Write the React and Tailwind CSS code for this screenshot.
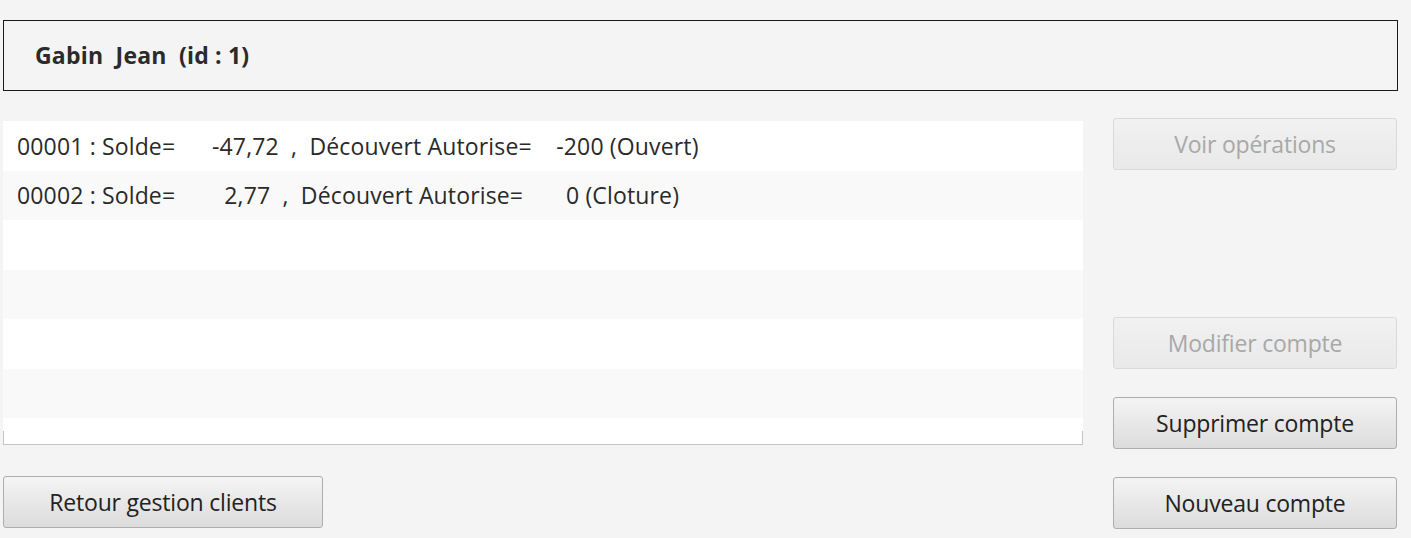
const accounts = [
  "00001 : Solde=      -47,72  ,  Découvert Autorise=    -200 (Ouvert)",
  "00002 : Solde=        2,77  ,  Découvert Autorise=       0 (Cloture)",
  "",
  "",
  "",
  "",
];

function Button({ children, disabled, className = "" }) {
  return (
    <button
      type="button"
      disabled={disabled}
      className={`h-[52px] rounded-[3px] border text-[23px] tracking-[-0.2px] ${
        disabled
          ? "border-[#dadada] bg-gradient-to-b from-[#f1f1f1] to-[#e9e9e9] text-[#a8a8a8]"
          : "border-[#adadad] bg-gradient-to-b from-[#f4f4f4] to-[#dcdcdc] text-[#222]"
      } ${className}`}
    >
      {children}
    </button>
  );
}

export default function App() {
  return (
    <div
      className="flex h-[538px] w-[1411px] flex-col bg-[#f4f4f4] px-[3px] pt-5"
      style={{ fontFamily: '"Open Sans", "Noto Sans", sans-serif' }}
    >
      <div className="flex h-[71px] w-[1395px] items-center border border-[#1a1a1a] pl-[31px]">
        <h1 className="whitespace-pre text-[23px] font-bold tracking-[0.2px] text-[#2b2b2b]">Gabin  Jean  (id : 1)</h1>
      </div>

      <div className="mt-[27px] flex gap-[30px]">
        <div className="flex w-[1080px] flex-col">
          <div className="mt-[3px] flex flex-col">
            {accounts.map((line, i) => (
              <div
                key={i}
                className={`flex h-[49.5px] items-center whitespace-pre pl-[14px] text-[23px] tracking-[0.15px] text-[#2a2a2a] ${
                  i % 2 === 0 ? "bg-white" : "bg-[#f9f9f9]"
                }`}
              >
                {line}
              </div>
            ))}
            <div className="h-[13px] bg-white" />
            <div className="h-[14px] border-x border-b border-[#c4c4c4] bg-white" />
          </div>
          <Button className="mt-[31px] w-[320px]">Retour gestion clients</Button>
        </div>

        <div className="flex w-[284px] flex-col">
          <Button disabled>Voir opérations</Button>
          <Button disabled className="mt-[147px]">Modifier compte</Button>
          <Button className="mt-[28px]">Supprimer compte</Button>
          <Button className="mt-[28px]">Nouveau compte</Button>
        </div>
      </div>
    </div>
  );
}
